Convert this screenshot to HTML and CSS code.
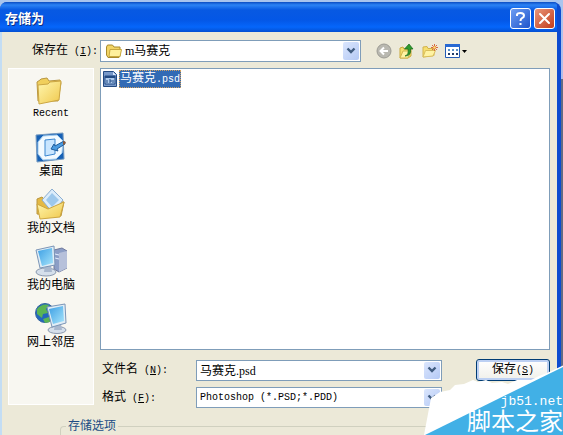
FILE: index.html
```html
<!DOCTYPE html>
<html lang="zh-CN">

<head>
    <meta charset="UTF-8">
    <meta name="viewport" content="width=device-width, initial-scale=1.0">
    <title>存储为</title>
    <link rel="stylesheet" href="styles.css">
</head>

<body>
    <div class="dialog">
        <div class="titlebar">
            <h1>存储为</h1>
            <button class="help" aria-label="帮助">
                <svg width="19" height="19" viewBox="0 0 19 19"><path d="M6 7V5.500Q6.500 4 9.500 4Q13 4 13 6.700Q13 8.200 11 9.200Q9.500 10 9.500 12M9.500 14v2" fill="none" stroke="#fff" stroke-width="2"/></svg>
            </button>
            <button class="close" aria-label="关闭">
                <svg width="19" height="19" viewBox="0 0 19 19"><path d="M5 5l9 9M14 5l-9 9" stroke="#fff" stroke-width="2" stroke-linecap="round"/></svg>
            </button>
        </div>

        <div class="content">
            <div class="lookin">
                <label for="folder">保存在<span class="latin"> (<u>I</u>):</span></label>
                <div class="combo folder">
                    <svg class="folder-icon" width="16" height="14" viewBox="0 0 16 14">
                        <path d="M.5 11V3l1-2h5l1.500 2h6v9l-1 1.500H2z" fill="#f2d465" stroke="#a88a2c"/>
                        <path d="M3 12.500L4 5.500h11.500l-1.500 7z" fill="#fff09b" stroke="#c8a83e"/>
                    </svg>
                    <select id="folder">
                        <option>m马赛克</option>
                    </select>
                    <span class="arrow"><svg width="10" height="8" viewBox="0 0 10 8"><path d="M1.500 1.500L5 5l3.500-3.500" fill="none" stroke="#405c80" stroke-width="2.400"/></svg></span>
                </div>
                <div class="tools">
                    <button aria-label="后退">
                        <svg width="16" height="16" viewBox="0 0 16 16"><circle cx="8" cy="8" r="7" fill="#b9b8b0" stroke="#9c9b94"/><path d="M12 8H5M8 4.500L4.500 8L8 11.500" fill="none" stroke="#fff" stroke-width="2"/></svg>
                    </button>
                    <button aria-label="向上一级">
                        <svg width="16" height="16" viewBox="0 0 16 16"><path d="M1 15V5l3-1 1 2h7v7l-3 2z" fill="#f6df70" stroke="#c9a93d"/><path d="M1 15l3-7h8l-3 7z" fill="#fff3a3" stroke="#d2b54e"/><path d="M6 13q4-1 3-7H5.500L10 1l4 5h-2.500q1 7-5.500 7z" fill="#2f9b2d" stroke="#17691b" stroke-width=".700"/></svg>
                    </button>
                    <button aria-label="新建文件夹">
                        <svg width="16" height="16" viewBox="0 0 16 16"><path d="M1 14V4l4-.500 1 2h6v7z" fill="#f6df70" stroke="#d2b24c"/><path d="M1 14l2.500-6.500h10L11 13z" fill="#fff3a3" stroke="#d9be5c"/><path d="M12.500 1v7M9 4.500h7M10 2l5 5M15 2l-5 5" stroke="#d8683f"/><circle cx="12.500" cy="4.500" r="1.300" fill="#ffe173"/></svg>
                    </button>
                    <button aria-label="查看菜单">
                        <svg width="23" height="16" viewBox="0 0 23 16"><path d="M.5 1.500h14v13H.5z" fill="#fff" stroke="#235bb5"/><path d="M0 1h15v3H0z" fill="#2869d3"/><path d="M3 6h2v2H3zM7 6h2v2H7zM11 6h2v2h-2z" fill="#5b91c8"/><path d="M3 10h2v2H3zM7 10h2v2H7zM11 10h2v2h-2z" fill="#223c69"/><path d="M17 7h5l-2.500 3z" fill="#000"/></svg>
                    </button>
                </div>
            </div>

            <div class="main">
                <nav class="places">
                    <button>
                        <svg width="32" height="32" viewBox="0 0 32 32">
                            <path d="M3 27L2 8l3-2 1-1 6-1 2 3 11-1 1 3-3 18z" fill="#f0cf5c" stroke="#b99742"/>
                            <path d="M3 11l10-1 2-2 11-1-2 19-20 4z" fill="url(#gold)" stroke="#cca744"/>
                        </svg>
                        <span class="latin">Recent</span>
                    </button>
                    <button>
                        <svg width="32" height="32" viewBox="0 0 32 32">
                            <path d="M1 4l27-2 1 26-27 3z" fill="#1761b5" stroke="#769bc1"/>
                            <path d="M8 5l14-1 6 6-1 12-6 6-13 1-5-6V11z" fill="#f2faff" stroke="#9fcaee"/>
                            <path d="M10 9l10-1v15l-10 2z" fill="#c9e6ff" stroke="#3b86cf"/>
                            <path d="M16 18l3-5 1 2 9-5 1 3-8 5 1 2z" fill="#4a9be0" stroke="#1f5d9c"/>
                            <path d="M28 10l3 1-1 2-2 1z" fill="#8b5a3a"/>
                        </svg>
                        <span>桌面</span>
                    </button>
                    <button>
                        <svg width="32" height="32" viewBox="0 0 32 32">
                            <path d="M2 26V11l5-2 4 4 18 1-3 14z" fill="#e4b944" stroke="#ba963e"/>
                            <path d="M7 12L17 1l11 11-10 13z" fill="#dcedfb" stroke="#8badd0"/>
                            <path d="M11 12l6-7 7 7-7 7z" fill="#9dc8ec"/>
                            <path d="M2 16l11 5 16-7-4 15-20 2z" fill="url(#gold)" stroke="#cda640"/>
                        </svg>
                        <span>我的文档</span>
                    </button>
                    <button>
                        <svg width="32" height="32" viewBox="0 0 32 32">
                            <path d="M19 5l8-2 5 3v17l-8 4-5-3z" fill="#8c9ec6" stroke="#70799d"/>
                            <path d="M24 8l8-2v17l-8 4z" fill="#b6c0da"/>
                            <path d="M20 9l4 1M20 13l4 1" stroke="#e5efff"/>
                            <ellipse cx="11" cy="27" rx="10" ry="4" fill="#d5dfeb" stroke="#8998ae"/>
                            <path d="M10 20h6l1 7H9z" fill="#a9b8ce"/>
                            <path d="M1 5l18-4 1 19-15 3z" fill="#e0edf6" stroke="#7b95b7"/>
                            <path d="M3 6l14-3 1 15-11 3z" fill="url(#screen)"/>
                        </svg>
                        <span>我的电脑</span>
                    </button>
                    <button>
                        <svg width="32" height="32" viewBox="0 0 32 32">
                            <circle cx="10" cy="11" r="9.500" fill="#2467bd" stroke="#3465a0"/>
                            <path d="M2 7q5-6 12-4l-3 4 2 4-5 1-1 4-5-4zM8 17l6-2 1 5-5 1z" fill="#5bb454"/>
                            <ellipse cx="22" cy="28" rx="9" ry="3.500" fill="#d5dfeb" stroke="#8998ae"/>
                            <path d="M20 22h6l1 6h-8z" fill="#a9b8ce"/>
                            <path d="M12 5l18-3 1 19-14 4z" fill="#e0edf6" stroke="#7b95b7"/>
                            <path d="M14 7l14-3 1 15-11 3z" fill="url(#screen)"/>
                        </svg>
                        <span>网上邻居</span>
                    </button>
                </nav>

                <div class="files">
                    <ul class="list">
                        <li>
                            <svg width="16" height="16" viewBox="0 0 16 16"><path d="M1.500.5h10l3 3v12h-13z" fill="#7899ca" stroke="#244b83"/><path d="M11 1v3h3z" fill="#dceaff"/><path d="M3 5h10v8H3z" fill="#aecbee" stroke="#234b84"/><path d="M3 6h10" stroke="#234b84" stroke-width="2"/><path d="M5 9v3M7 9h2v2H7M11 9v3" fill="none" stroke="#234b84"/></svg>
                            <a href="#">马赛克<span class="latin">.psd</span></a>
                        </li>
                    </ul>
                    <div class="fields">
                        <label for="filename">文件名<span class="latin"> (<u>N</u>):</span></label>
                        <div class="combo">
                            <input id="filename" type="text" value="马赛克.psd">
                            <button class="arrow" aria-label="最近的文件名"><svg width="10" height="8" viewBox="0 0 10 8"><path d="M1.500 1.500L5 5l3.500-3.500" fill="none" stroke="#405c80" stroke-width="2.400"/></svg></button>
                        </div>
                        <button class="save">保存<span class="latin">(<u>S</u>)</span></button>
                        <label for="format">格式<span class="latin"> (<u>F</u>):</span></label>
                        <div class="combo">
                            <select id="format" class="latin">
                                <option>Photoshop (*.PSD;*.PDD)</option>
                            </select>
                            <span class="arrow"><svg width="10" height="8" viewBox="0 0 10 8"><path d="M1.500 1.500L5 5l3.500-3.500" fill="none" stroke="#405c80" stroke-width="2.400"/></svg></span>
                        </div>
                    </div>
                </div>
            </div>

            <fieldset class="options">
                <legend>存储选项</legend>
            </fieldset>
        </div>
    </div>

    <div class="watermark">
        <svg width="140" height="74" viewBox="0 0 140 74">
            <path d="M1 74L8 37l9-6 10-2 5-5 9-1 9-4 5 2 8-2 6 3 10-1 6 2 9-4h14l8-4 8-3 17-8v70z" fill="#fff"/>
            <path d="M2 74L140 6v68z" fill="#41b0e6"/>
        </svg>
        <div class="mark">
            <span class="site">jb51.net</span>
            <span class="name">脚本之家</span>
        </div>
    </div>

    <!-- shared gradients for the place icons -->
    <svg class="defs" width="0" height="0">
        <defs>
            <linearGradient id="gold" x1="0" y1="0" x2="1" y2="1">
                <stop offset="0" stop-color="#fff7b0"/>
                <stop offset="1" stop-color="#f0c84c"/>
            </linearGradient>
            <linearGradient id="screen" x1="0" y1="0" x2="1" y2="1">
                <stop offset="0" stop-color="#3d9fe4"/>
                <stop offset="1" stop-color="#a6e4fb"/>
            </linearGradient>
        </defs>
    </svg>
</body>

</html>
```

FILE: styles.css
```css
* {
    margin: 0;
    padding: 0;
    box-sizing: border-box;
}

body {
    position: relative;
    height: 100vh;
    overflow: hidden;
    padding: 2px 2px 0 0;
    background: linear-gradient(#a9c5ee 0, #b3bce8 79px, #626b85 79px);
    font: 12px/16px "Liberation Serif", "Noto Sans CJK SC", serif;
    color: #000;
}

button,
input,
select {
    font: inherit;
    color: inherit;
    border: none;
    background: none;
    outline: none;
}

svg {
    display: block;
    flex: none;
}

.latin {
    font-family: "Liberation Mono", "Noto Sans CJK SC", monospace;
    font-size: 10px;
    white-space: pre;
}

.dialog {
    height: 100%;
    display: flex;
    flex-direction: column;
    border-right: 4px solid #0c4bd0;
    border-radius: 7px 8px 0 0;
    background-color: #0c4bd0;
}

.titlebar {
    display: flex;
    align-items: center;
    gap: 3px;
    height: 30px;
    padding: 3px 2px 0 5px;
    border-radius: 7px 4px 0 0;
    background: linear-gradient(#0b4cc2 0, #2c83f5 3px, #0859e2 8px, #0457e6 18px, #0566fb 25px, #0450d2 30px);
}

.titlebar h1 {
    flex: 1;
    font-size: 13px;
    font-weight: bold;
    color: #fff;
    text-shadow: 1px 1px #0b2f86;
}

.titlebar button {
    width: 21px;
    height: 21px;
    border: 1px solid #fff;
    border-radius: 3px;
}

.titlebar .help {
    background: linear-gradient(135deg, #6d9df2, #1f55cc);
}

.titlebar .close {
    background: linear-gradient(135deg, #e9967a, #c23c1c);
}

.content {
    flex: 1;
    min-height: 0;
    display: flex;
    flex-direction: column;
    gap: 6px;
    padding: 8px 7px 0 6px;
    border-left: 2px solid #c3ddf4;
    background-color: #ece9d8;
}

.lookin {
    display: flex;
    align-items: center;
}

.lookin label {
    width: 92px;
    padding-left: 24px;
    white-space: nowrap;
}

.combo {
    position: relative;
    display: flex;
    align-items: center;
    height: 21px;
    border: 1px solid #7f9db9;
    background-color: #fff;
}

.combo input,
.combo select {
    flex: 1;
    min-width: 0;
    height: 100%;
    padding: 0 20px 0 3px;
    appearance: none;
}

.combo .latin {
    font-size: 10px;
}

.combo .arrow {
    position: absolute;
    top: 1px;
    right: 1px;
    bottom: 1px;
    width: 16px;
    display: flex;
    align-items: center;
    justify-content: center;
    border-radius: 2px;
    background: linear-gradient(135deg, #dbe6fd, #b4c9f5);
    pointer-events: none;
}

.folder {
    flex: 0 1 261px;
    height: 22px;
    padding-left: 5px;
}

.tools {
    display: flex;
    gap: 7px;
    padding-left: 15px;
}

.main {
    flex: 1;
    min-height: 0;
    display: flex;
    gap: 6px;
}

.places {
    width: 86px;
    display: flex;
    flex-direction: column;
    gap: 9px;
    margin-bottom: 3px;
    padding-top: 5px;
    border: 1px solid #fff;
    background-color: #f8f7f1;
}

.places button {
    display: flex;
    flex-direction: column;
    align-items: center;
}

.files {
    flex: 1;
    min-width: 0;
    display: flex;
    flex-direction: column;
    gap: 9px;
}

.list {
    flex: 1;
    list-style: none;
    padding: 1px;
    border: 1px solid #7f9db9;
    background-color: #fff;
}

.list li {
    display: flex;
    align-items: center;
    gap: 1px;
}

.list a {
    padding: 0 1px;
    color: #fff;
    text-decoration: none;
    background-color: #316ab5;
    outline: 1px dotted #d0a060;
    outline-offset: -1px;
}

.fields {
    display: grid;
    grid-template-columns: 96px minmax(0, 246px) 1fr;
    row-gap: 6px;
    align-items: center;
}

.fields label {
    padding-left: 2px;
    white-space: nowrap;
}

.save {
    justify-self: end;
    width: 74px;
    height: 22px;
    border: 1px solid #003c74;
    border-radius: 3px;
    background: linear-gradient(#fff, #f0f0ea);
    box-shadow: inset 0 0 0 2px #bcd0f3;
}

.options {
    height: 17px;
    margin: 4px 0 0 52px;
    padding-left: 5px;
    border: 1px solid #d0d0bf;
    border-bottom: none;
    border-radius: 4px 4px 0 0;
}

.options legend {
    padding: 0 2px;
    color: #204c84;
}

.defs {
    position: absolute;
}

/* site mark laid over the bottom right corner */
.watermark {
    position: absolute;
    right: 0;
    bottom: 0;
}

.mark {
    position: absolute;
    right: 0;
    bottom: 0;
    display: flex;
    flex-direction: column;
    align-items: flex-end;
    color: #fff;
    white-space: nowrap;
}

.site {
    font: 13px/14px "Liberation Mono", monospace;
}

.name {
    font: 24px/26px "Liberation Sans", "Noto Sans CJK SC", sans-serif;
}
```
